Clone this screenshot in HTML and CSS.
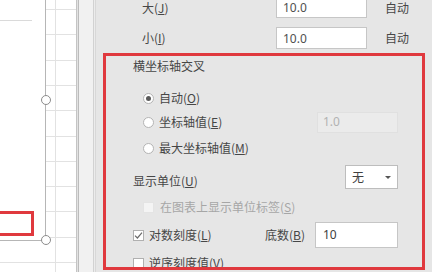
FILE: index.html
```html
<!DOCTYPE html>
<html lang="zh-CN">
<head>
<meta charset="utf-8">
<title>设置坐标轴格式</title>
<link rel="stylesheet" href="styles.css">
</head>
<body>
<div class="app">
  <div class="sheet">
    <div class="chart"></div>
    <div class="chart-gridline"></div>
    <span class="handle handle-mid"></span>
    <span class="handle handle-corner"></span>
    <div class="mark"></div>
  </div>
  <div class="gutter"></div>
  <div class="panel">
    <div class="bounds">
      <div class="brow">
        <span class="blabel">大(<u>J</u>)</span>
        <span class="field">10.0</span>
        <span class="auto">自动</span>
      </div>
      <div class="brow">
        <span class="blabel">小(<u>I</u>)</span>
        <span class="field">10.0</span>
        <span class="auto">自动</span>
      </div>
    </div>
    <div class="group">
      <div class="row title">横坐标轴交叉</div>
      <div class="row opt opt-auto">
        <span class="radio on"></span><span class="txt">自动(<u>O</u>)</span>
      </div>
      <div class="row opt">
        <span class="radio"></span><span class="txt">坐标轴值(<u>E</u>)</span>
        <span class="field field-off">1.0</span>
      </div>
      <div class="row opt opt-max">
        <span class="radio"></span><span class="txt">最大坐标轴值(<u>M</u>)</span>
      </div>
      <div class="row sub unit">
        <span class="txt unit-label">显示单位(<u>U</u>)</span>
        <span class="select">无<span class="caret"></span></span>
      </div>
      <div class="row opt disabled">
        <span class="check"></span><span class="txt">在图表上显示单位标签(<u>S</u>)</span>
      </div>
      <div class="row sub log">
        <span class="check checked"><svg viewBox="0 0 11 11" width="11" height="11"><path d="M2 5.6 L4.4 8 L9 2.6" fill="none" stroke="#6a6a6a" stroke-width="1.2"/></svg></span>
        <span class="txt">对数刻度(<u>L</u>)</span>
        <span class="base">
          <span class="txt">底数(<u>B</u>)</span>
          <span class="field field-base">10</span>
        </span>
      </div>
      <div class="row sub rev">
        <span class="check"></span><span class="txt">逆序刻度值(<u>V</u>)</span>
      </div>
    </div>
  </div>
</div>
</body>
</html>
```
FILE: styles.css
```css
* { box-sizing: border-box; }
html, body { margin: 0; padding: 0; }
body {
  width: 432px;
  height: 272px;
  overflow: hidden;
  font-family: "Noto Sans CJK SC", "Noto Sans", sans-serif;
  font-size: 12px;
  color: #464646;
}
u { text-decoration: underline; text-underline-offset: 1px; }

.app {
  display: flex;
  width: 432px;
  height: 272px;
}

/* spreadsheet side */
.sheet {
  position: relative;
  width: 76px;
  height: 272px;
  overflow: hidden;
  background-color: #ffffff;
  background-image:
    linear-gradient(to right, transparent 55px, #e2e2e2 55px, #e2e2e2 56px, transparent 56px),
    repeating-linear-gradient(to bottom, #e2e2e2 0, #e2e2e2 1px, transparent 1px, transparent 25.3px);
  background-position: 0 0, 0 9px;
}
.chart {
  position: absolute;
  left: -20px;
  top: -20px;
  width: 65px;
  height: 260px;
  background: #ffffff;
  border-right: 1px solid #b6b6b6;
  border-bottom: 1px solid #b6b6b6;
  box-sizing: content-box;
}
.chart-gridline {
  position: absolute;
  left: 0;
  top: 20px;
  width: 32px;
  height: 1px;
  background: #dadada;
}
.handle {
  position: absolute;
  width: 10px;
  height: 10px;
  border: 1px solid #8c8c8c;
  border-radius: 50%;
  background: #ffffff;
}
.handle-mid { left: 41px; top: 95px; }
.handle-corner { left: 41px; top: 235px; }
.mark {
  position: absolute;
  left: -6px;
  top: 211px;
  width: 40px;
  height: 25px;
  border: 3px solid #e0393e;
}

.gutter {
  width: 21px;
  height: 272px;
  background: linear-gradient(to right,
    #c4c4c4 0, #c4c4c4 1px,
    #e2e2e2 1px, #e2e2e2 2px,
    #bcbcbc 2px, #bcbcbc 3px,
    #f1f1f1 3px, #f1f1f1 17px,
    #d2d2d2 17px, #d2d2d2 18px,
    #ececec 18px, #ececec 19px,
    #d8d8d8 19px, #d8d8d8 20px,
    #e6e6e6 20px);
}

/* format panel */
.panel {
  flex: 1;
  height: 272px;
  background: #e6e6e6;
  overflow: hidden;
}
.bounds {
  margin-top: -4px;
  display: flex;
  flex-direction: column;
  gap: 9px;
}
.brow {
  display: grid;
  grid-template-columns: 116px 91px auto;
  column-gap: 18px;
  align-items: center;
  height: 22px;
  padding-left: 45px;
}
.blabel, .auto { line-height: 14px; }
.brow:first-child .blabel,
.brow:first-child .auto { align-self: end; margin-bottom: 3px; }

.field {
  display: flex;
  align-items: center;
  height: 22px;
  padding-left: 6px;
  background: #ffffff;
  border: 1px solid #c6c6c6;
  color: #505050;
  font-family: "Noto Sans", "Noto Sans CJK SC", sans-serif;
  font-size: 12px;
}

.group {
  margin: 4px 0 0 6px;
  width: 322px;
  height: 217px;
  border: 3px solid #e0393e;
  overflow: hidden;
  padding-right: 24px;
}
.row {
  display: flex;
  align-items: center;
  height: 24px;
  line-height: 16px;
}
.title { height: 20px; padding-left: 27px; }
.opt { padding-left: 37px; }
.sub { padding-left: 27px; }
.opt-auto { margin-top: 10px; }
.opt-max { margin-top: 2px; }
.unit { margin-top: 5px; }
.disabled { margin-top: 6px; color: #a6a6a6; }
.log { margin-top: 3px; height: 26px; }
.rev { margin-top: 3px; }

.radio {
  width: 11px;
  height: 11px;
  border: 1px solid #b4b4b4;
  border-radius: 50%;
  background: #ffffff;
  margin-right: 5px;
  display: flex;
  align-items: center;
  justify-content: center;
  flex: none;
}
.radio.on::after {
  content: "";
  width: 5px;
  height: 5px;
  border-radius: 50%;
  background: #5a5a5a;
}
.check {
  width: 11px;
  height: 11px;
  border: 1px solid #b0b0b0;
  background: #ffffff;
  margin-right: 5px;
  flex: none;
  position: relative;
}
.disabled .check { border-color: #e4e4e4; background: #f4f4f4; margin-right: 6px; }
.check svg { position: absolute; left: -1px; top: -1px; }

.field-off {
  margin-left: auto;
  width: 81px;
  height: 21px;
  background: #ebebeb;
  border-color: #e0e0e0;
  color: #b2b2b2;
  padding-left: 5px;
}
.unit-label { padding-top: 7px; }
.select {
  margin-left: auto;
  width: 53px;
  height: 24px;
  background: #ffffff;
  border: 1px solid #bdbdbd;
  display: flex;
  align-items: center;
  padding-left: 6px;
  position: relative;
  color: #404040;
}
.caret {
  position: absolute;
  right: 6px;
  top: 10px;
  width: 0;
  height: 0;
  border-left: 3px solid transparent;
  border-right: 3px solid transparent;
  border-top: 3px solid #555555;
}
.base {
  margin-left: auto;
  display: flex;
  align-items: center;
  gap: 10px;
}
.field-base {
  width: 83px;
  height: 26px;
  padding-left: 7px;
  color: #404040;
}
```
